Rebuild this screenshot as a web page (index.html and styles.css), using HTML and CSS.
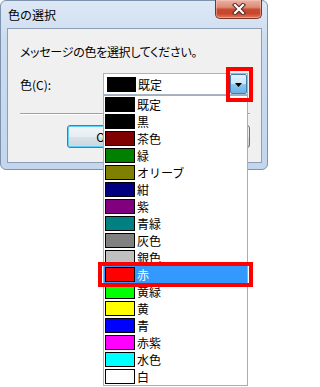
FILE: index.html
```html
<!DOCTYPE html>
<html lang="ja">
<head>
<meta charset="utf-8">
<title>色の選択</title>
<link rel="stylesheet" href="styles.css">
</head>
<body>
<div class="page">
  <div class="window">
    <div class="titlebar">
      <span class="title">色の選択</span>
      <div class="close">
        <svg width="14" height="12" viewBox="0 0 14 12">
          <path d="M3 2 L11 10 M11 2 L3 10" stroke="#4e2a22" stroke-width="4.2" stroke-linecap="square" fill="none"/>
          <path d="M3 2 L11 10 M11 2 L3 10" stroke="#ffffff" stroke-width="2.2" stroke-linecap="square" fill="none"/>
        </svg>
      </div>
    </div>
    <div class="client">
      <p class="message">メッセージの色を選択してください。</p>
      <div class="field">
        <span class="label">色(C):</span>
        <div class="combo">
          <span class="swatch combo-swatch" style="background:#000000"></span>
          <span class="combo-text">既定</span>
          <span class="drop-btn">
            <svg width="7" height="4" viewBox="0 0 7 4"><polygon points="0,0 7,0 3.5,4" fill="#000"/></svg>
          </span>
        </div>
      </div>
      <div class="separator"></div>
      <div class="buttons">
        <button class="btn btn-default">OK</button>
        <button class="btn">キャンセル</button>
      </div>
    </div>
  </div>

  <ul class="dropdown">
    <li class="item"><span class="swatch" style="background:#000000"></span>既定</li>
    <li class="item"><span class="swatch" style="background:#000000"></span>黒</li>
    <li class="item"><span class="swatch" style="background:#800000"></span>茶色</li>
    <li class="item"><span class="swatch" style="background:#008000"></span>緑</li>
    <li class="item"><span class="swatch" style="background:#808000"></span>オリーブ</li>
    <li class="item"><span class="swatch" style="background:#000080"></span>紺</li>
    <li class="item"><span class="swatch" style="background:#800080"></span>紫</li>
    <li class="item"><span class="swatch" style="background:#008080"></span>青緑</li>
    <li class="item"><span class="swatch" style="background:#808080"></span>灰色</li>
    <li class="item"><span class="swatch" style="background:#c0c0c0"></span>銀色</li>
    <li class="item selected"><span class="swatch" style="background:#ff0000"></span>赤</li>
    <li class="item"><span class="swatch" style="background:#00ff00"></span>黄緑</li>
    <li class="item"><span class="swatch" style="background:#ffff00"></span>黄</li>
    <li class="item"><span class="swatch" style="background:#0000ff"></span>青</li>
    <li class="item"><span class="swatch" style="background:#ff00ff"></span>赤紫</li>
    <li class="item"><span class="swatch" style="background:#00ffff"></span>水色</li>
    <li class="item"><span class="swatch" style="background:#ffffff"></span>白</li>
  </ul>

  <div class="mark mark-button"></div>
  <div class="mark mark-item"></div>
</div>
</body>
</html>
```

FILE: styles.css
```css
* { box-sizing: border-box; }

html, body {
  margin: 0;
  padding: 0;
  background: #ffffff;
}

body {
  font-family: "Noto Sans CJK JP", "Noto Sans", sans-serif;
  font-size: 12px;
  color: #000000;
}

.page {
  position: relative;
  width: 268px;
  height: 387px;
  overflow: hidden;
}

/* ---------- window frame ---------- */
.window {
  width: 268px;
  border: 1px solid #7d93ad;
  border-radius: 6px;
  background: linear-gradient(#dde8f5 0%, #cbdcf0 25%, #c3d6ed 100%);
  padding: 0 5px 6px 6px;
}

.titlebar {
  height: 27px;
  display: flex;
  justify-content: space-between;
  align-items: flex-start;
}

.title {
  margin-top: 6px;
  margin-left: 1px;
  font-size: 12px;
  line-height: 16px;
  color: #000000;
}

.close {
  width: 47px;
  height: 19px;
  margin-top: -1px;
  border: 1px solid #7a3327;
  border-top: none;
  border-radius: 0 0 5px 5px;
  background: linear-gradient(#eab1a2 0%, #dd8c77 40%, #c94b31 52%, #c8462c 75%, #dc7a5f 100%);
  box-shadow: inset 0 0 0 1px rgba(255, 210, 200, 0.45);
  display: flex;
  align-items: center;
  justify-content: center;
}

.close svg { display: block; }

/* ---------- client area ---------- */
.client {
  border: 1px solid #8d9eb5;
  background: #f0f0f0;
  padding: 15px 11px 14px 12px;
}

.message {
  margin: 0;
  line-height: 15px;
  font-feature-settings: "palt";
  letter-spacing: -0.3px;
}

.field {
  margin-top: 14px;
  display: flex;
  align-items: center;
}

.label {
  width: 83px;
  line-height: 15px;
}

.combo {
  width: 145px;
  height: 22px;
  border: 1px solid #a9b4c2;
  background: #ffffff;
  display: flex;
  align-items: center;
}

.swatch {
  display: inline-block;
  width: 30px;
  height: 15px;
  border: 1px solid #000000;
  flex: none;
}

.combo-swatch {
  width: 29px;
  margin-left: 3px;
}

.combo-text {
  margin-left: 2px;
  line-height: 15px;
}

.drop-btn {
  margin-left: auto;
  width: 17px;
  height: 20px;
  border: 1px solid #3c7fb1;
  border-radius: 2px;
  background: linear-gradient(#e3f1fc 0%, #cfe6f8 48%, #8dc6ee 52%, #6cb2e6 100%);
  display: flex;
  align-items: center;
  justify-content: center;
}

.drop-btn svg { display: block; margin-top: 1px; }

.separator {
  margin-top: 18px;
  height: 2px;
  border-top: 1px solid #a0a0a0;
  border-bottom: 1px solid #ffffff;
}

.buttons {
  margin-top: 10px;
  display: flex;
  justify-content: flex-end;
  gap: 33px;
}

.btn {
  width: 75px;
  height: 23px;
  padding: 0;
  border: 1px solid #707070;
  border-radius: 3px;
  background: linear-gradient(#f2f2f2 0%, #ebebeb 50%, #dddddd 51%, #cfcfcf 100%);
  font-family: "Noto Sans CJK JP", "Noto Sans", sans-serif;
  font-size: 12px;
  color: #000000;
}

.btn-default {
  border-color: #3c7fb1;
  box-shadow: inset 0 0 0 1px #5fd0f7;
  background: linear-gradient(#f1f5f8 0%, #e7eef3 50%, #d9e2e9 51%, #ccd6de 100%);
}

/* ---------- dropdown list (overlay) ---------- */
.dropdown {
  position: absolute;
  left: 103px;
  top: 95px;
  width: 145px;
  margin: 0;
  padding: 0;
  list-style: none;
  background: #ffffff;
  border: 1px solid #a3adbb;
}

.item {
  height: 17px;
  display: flex;
  align-items: flex-start;
  padding-left: 1px;
  line-height: 17px;
  white-space: nowrap;
}

.item .swatch {
  margin-top: 1px;
  margin-right: 2px;
}

.item.selected {
  background: #3399ff;
  color: #ffffff;
}

/* ---------- red annotation boxes (overlay) ---------- */
.mark {
  position: absolute;
  border: 4px solid #ff0000;
}

.mark-button {
  left: 226px;
  top: 67px;
  width: 27px;
  height: 35px;
}

.mark-item {
  left: 98px;
  top: 262px;
  width: 155px;
  height: 25px;
}
```
